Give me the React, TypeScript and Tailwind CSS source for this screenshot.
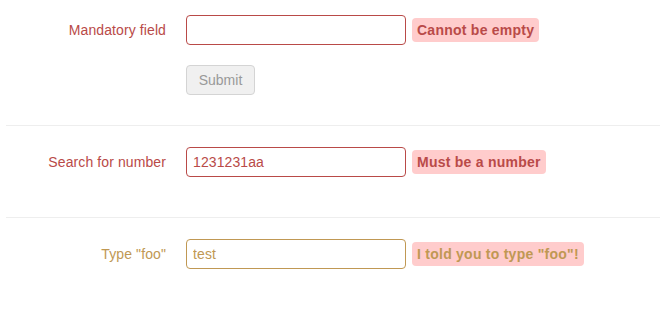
import React from "react";

const font = { fontFamily: '"Liberation Sans", Arial, sans-serif' };

function Row({
  label,
  value,
  message,
  tone,
}: {
  label: string;
  value: string;
  message: string;
  tone: "error" | "warning";
}) {
  const text = tone === "error" ? "text-[#b94a48]" : "text-[#c09853]";
  const border = tone === "error" ? "border-[#b94a48]" : "border-[#c09853]";
  return (
    <div className="flex items-center h-[30px]">
      <label className={`w-[160px] shrink-0 text-right text-[14px] tracking-[0.1px] ${text}`}>{label}</label>
      <input
        readOnly
        value={value}
        className={`ml-[20px] w-[220px] h-[30px] rounded-[4px] border bg-white px-[6px] text-[14px] tracking-[0.1px] outline-none ${border} ${text}`}
        style={font}
      />
      <span
        className={`ml-[6px] h-[24px] flex items-center rounded-[4px] bg-[#ffcccc] px-[5px] text-[14px] font-bold tracking-[0.25px] ${text}`}
      >
        {message}
      </span>
    </div>
  );
}

export default function App() {
  return (
    <div className="w-[660px] h-[330px] bg-white pl-[6px]" style={font}>
      <div className="pt-[15px]">
        <Row label="Mandatory field" value="" message="Cannot be empty" tone="error" />
        <div className="mt-[20px] pl-[180px]">
          <button
            disabled
            className="h-[30px] w-[69px] rounded-[4px] border border-[#d4d4d4] bg-[#f0f0f0] text-[14px] text-[#999999]"
            style={font}
          >
            Submit
          </button>
        </div>
      </div>
      <div className="mt-[30px] h-px bg-[#eeeeee]" />
      <div className="pt-[21px]">
        <Row label="Search for number" value="1231231aa" message="Must be a number" tone="error" />
      </div>
      <div className="mt-[40px] h-px bg-[#eeeeee]" />
      <div className="pt-[21px]">
        <Row label={'Type "foo"'} value="test" message={'I told you to type "foo"!'} tone="warning" />
      </div>
    </div>
  );
}
